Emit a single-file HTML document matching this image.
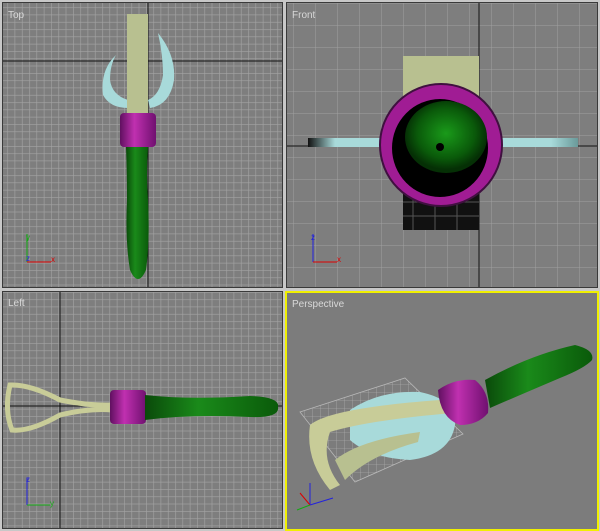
<!DOCTYPE html>
<html><head><style>body{margin:0;background:#c8c8c8;width:600px;height:531px;overflow:hidden}svg{display:block}text{font-family:"Liberation Sans",sans-serif;font-size:10px;fill:#d8d8d8}</style></head><body>
<svg width="600" height="531" viewBox="0 0 600 531" xmlns="http://www.w3.org/2000/svg">
<defs>
<pattern id="g" width="7.3" height="7.3" patternUnits="userSpaceOnUse"><rect width="7.3" height="7.3" fill="#7e7e7e"/><path d="M0 0H7.3M0 0V7.3" stroke="#a4a4a4" stroke-width="1.2"/></pattern>
<pattern id="F" width="22" height="22" patternUnits="userSpaceOnUse" x="293" y="3"><rect width="22" height="22" fill="#7e7e7e"/><path d="M0 0H22M0 0V22" stroke="#a0a0a0" stroke-width="1"/></pattern>
<pattern id="P" width="8" height="8" patternUnits="userSpaceOnUse"><path d="M0 0H8M0 0V8" stroke="#b8b8b8" stroke-width=".6" fill="none"/></pattern>
<linearGradient id="gr" x1="0" x2="1"><stop offset="0" stop-color="#0a4a0a"/><stop offset=".4" stop-color="#1a8a1a"/><stop offset="1" stop-color="#0a5a0a"/></linearGradient>
<linearGradient id="pk" x1="0" x2="1"><stop offset="0" stop-color="#601060"/><stop offset=".4" stop-color="#c030b0"/><stop offset="1" stop-color="#701070"/></linearGradient>
<linearGradient id="bar" x1="0" x2="1"><stop offset="0" stop-color="#111"/><stop offset=".1" stop-color="#a8dada"/><stop offset=".9" stop-color="#a8dada"/><stop offset="1" stop-color="#6a9a9a"/></linearGradient>
<radialGradient id="in" cx=".5" cy=".45" r=".5"><stop offset="0" stop-color="#1a9a1a"/><stop offset=".7" stop-color="#0a5a0a"/><stop offset="1" stop-color="#053005"/></radialGradient>
</defs>
<rect x="2" y="2" width="281" height="286" fill="#3a3a3a"/><rect x="3" y="3" width="279" height="284" fill="url(#g)"/>
<rect x="286" y="2" width="312" height="286" fill="#3a3a3a"/><rect x="287" y="3" width="310" height="284" fill="url(#F)"/>
<rect x="2" y="291" width="281" height="238" fill="#3a3a3a"/><rect x="3" y="292" width="279" height="236" fill="url(#g)"/>
<rect x="286" y="292" width="312" height="238" fill="#7c7c7c" stroke="#f0f000" stroke-width="2"/>
<!-- Top view -->
<line x1="3" y1="61" x2="282" y2="61" stroke="#111"/><line x1="148" y1="3" x2="148" y2="287" stroke="#111"/>
<path d="M116 55Q100 70 103 95Q110 108 128 108L128 100Q112 95 110 80Q110 65 116 55Z M158 33Q176 55 174 80Q170 105 150 108L148 100Q160 95 163 75Q163 55 158 33Z" fill="#a8dada"/>
<rect x="127" y="14" width="21" height="100" fill="#b8c090"/>
<rect x="120" y="113" width="36" height="34" rx="4" fill="url(#pk)"/>
<path d="M126 147H148Q146 175 148 200Q150 240 146 270Q138 288 130 270Q125 240 127 200Q127 175 126 147Z" fill="url(#gr)"/>
<text x="8" y="18">Top</text>
<path d="M27 262V234" stroke="#1a1"/><path d="M27 262H51" stroke="#d00"/><text x="26" y="240" style="fill:#1a1;font-size:8px">y</text><text x="51" y="262" style="fill:#d00;font-size:8px">x</text><text x="26" y="261" style="fill:#22d;font-size:8px">z</text>
<!-- Front view -->
<line x1="287" y1="146" x2="597" y2="146" stroke="#111"/><line x1="479" y1="3" x2="479" y2="287" stroke="#111"/>
<rect x="403" y="56" width="76" height="44" fill="#b8c090"/>
<rect x="403" y="180" width="76" height="50" fill="#111"/><path d="M403 202H479M403 216H479M413 180V230M435 180V230M457 180V230" stroke="#555"/>
<rect x="308" y="138" width="270" height="9" fill="url(#bar)"/>
<circle cx="441" cy="145" r="61" fill="#a01c94" stroke="#401040" stroke-width="2"/>
<ellipse cx="440" cy="148" rx="48" ry="49" fill="#000"/>
<ellipse cx="446" cy="137" rx="41" ry="36" fill="url(#in)"/>
<circle cx="440" cy="147" r="4" fill="#000"/>
<text x="292" y="18">Front</text>
<path d="M313 262V234" stroke="#22d"/><path d="M313 262H337" stroke="#d00"/><text x="311" y="240" style="fill:#22d;font-size:8px">z</text><text x="337" y="262" style="fill:#d00;font-size:8px">x</text>
<!-- Left view -->
<line x1="60" y1="292" x2="60" y2="528" stroke="#111"/><line x1="3" y1="406" x2="282" y2="406" stroke="#111"/>
<path d="M10 385Q30 384 60 400Q90 406 112 405L112 410Q90 408 60 415Q30 432 12 430Q4 410 10 385Z" fill="none" stroke="#c8cc98" stroke-width="5"/>
<rect x="110" y="390" width="36" height="34" rx="4" fill="url(#pk)"/>
<path d="M145 395Q190 400 250 396Q280 397 278 407Q280 418 250 417Q190 414 145 420Z" fill="url(#gr)"/>
<text x="8" y="306">Left</text>
<path d="M27 505V478" stroke="#22d"/><path d="M27 505H50" stroke="#1a1"/><text x="26" y="482" style="fill:#22d;font-size:8px">z</text><text x="50" y="506" style="fill:#1a1;font-size:8px">y</text>
<!-- Perspective -->
<text x="292" y="307">Perspective</text>
<path d="M300 412L405 378L463 434L355 482Z" fill="url(#P)" stroke="#b8b8b8" stroke-width=".8"/>
<path d="M350 410Q380 390 420 392Q458 400 455 425Q450 455 410 460Q370 458 350 440Z" fill="#a8dada"/>
<path d="M310 425Q330 408 440 400L453 413Q370 420 330 432Q320 460 340 485L330 490Q305 460 310 425Z" fill="#c8cc98"/>
<path d="M335 460Q360 440 420 432L418 442Q370 455 345 480Z" fill="#b8c090"/>
<path d="M438 390Q455 378 475 380Q490 392 488 413Q478 425 460 425Q440 418 438 390Z" fill="url(#pk)"/>
<path d="M485 380Q530 355 575 345Q595 350 592 360Q585 368 560 378Q520 395 490 408Z" fill="url(#gr)"/>
<path d="M310 505V483M310 505L333 498" stroke="#22d"/><path d="M310 505L300 493" stroke="#d00"/><path d="M310 505L297 510" stroke="#1a1"/>
</svg>
</body></html>
